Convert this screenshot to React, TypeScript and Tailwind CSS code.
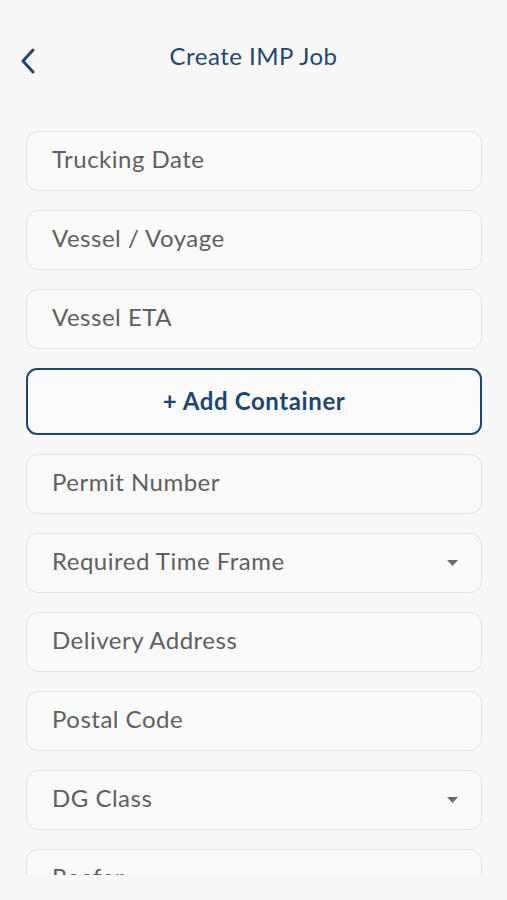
import React from 'react';

const fields = [
  { label: 'Trucking Date' },
  { label: 'Vessel / Voyage' },
  { label: 'Vessel ETA' },
  { label: '+ Add Container', button: true },
  { label: 'Permit Number' },
  { label: 'Required Time Frame', select: true },
  { label: 'Delivery Address' },
  { label: 'Postal Code' },
  { label: 'DG Class', select: true },
  { label: 'Reefer', select: true },
];

function Caret() {
  return (
    <svg width="11" height="6" viewBox="0 0 11 6" className="shrink-0">
      <path d="M0 0 L11 0 L5.5 6 Z" fill="#6b6b6b" />
    </svg>
  );
}

export default function App() {
  return (
    <div
      className="h-[900px] w-full bg-[#f8f8f8] flex flex-col overflow-hidden"
      style={{ fontFamily: 'Lato, "Open Sans", sans-serif' }}
    >
      {/* Header */}
      <div className="h-[116px] pt-[36px] shrink-0">
        <div className="relative h-[40px] flex items-center justify-center">
          <button className="absolute left-[18px] top-[10px] p-[2px]">
            <svg width="16" height="26" viewBox="0 0 16 26">
              <path
                d="M13 2 L3 13 L13 24"
                fill="none"
                stroke="#1d4673"
                strokeWidth="3"
                strokeLinecap="round"
                strokeLinejoin="round"
              />
            </svg>
          </button>
          <h1 className="text-[24px] text-[#1d4673] tracking-[0.5px]">Create IMP Job</h1>
        </div>
      </div>

      {/* Form */}
      <div className="h-[759px] overflow-hidden pt-[15px] pl-[26px] pr-[25px] shrink-0">
        <div className="flex flex-col gap-[19px]">
          {fields.map((f) =>
            f.button ? (
              <button
                key={f.label}
                className="h-[67px] w-full rounded-[11px] border-2 border-[#1d4673] bg-[#fbfbfb] text-[24px] font-bold text-[#1d4673] tracking-[0.6px] pb-[2px]"
              >
                {f.label}
              </button>
            ) : (
              <div
                key={f.label}
                className="h-[60px] w-full shrink-0 rounded-[12px] border border-[#e1e1e1] bg-[#fafafa] flex items-center justify-between pl-[25px] pr-[23px]"
              >
                <span className="text-[24px] text-[#5f5f5f] tracking-[0.5px] -mt-[4px]">{f.label}</span>
                {f.select && <Caret />}
              </div>
            )
          )}
        </div>
      </div>
    </div>
  );
}
